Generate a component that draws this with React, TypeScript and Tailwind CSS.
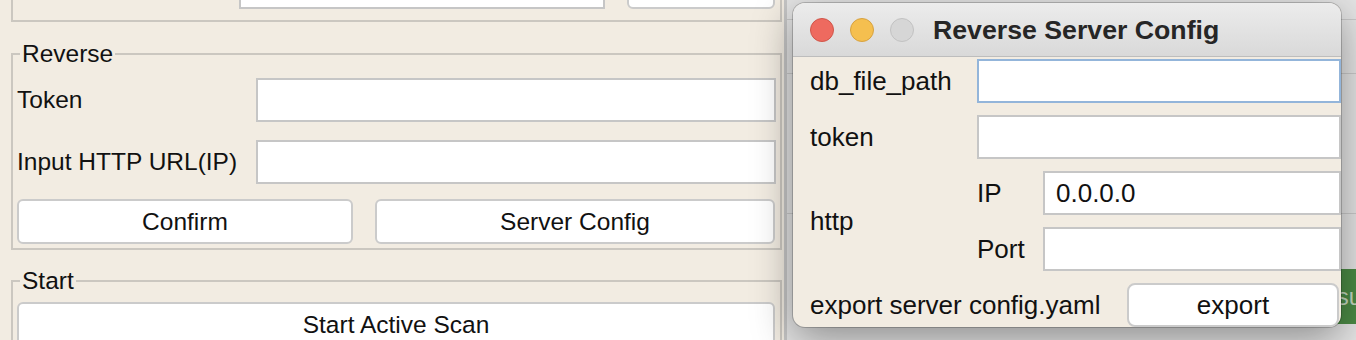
import React from 'react';

const inputBase = 'h-[44px] border-2 border-[#c6c6c6] bg-white px-[11px] outline-none';
const inputCls = inputBase + ' w-full';
const btnCls = 'h-[45px] rounded-[6px] border-2 border-[#cbcbcb] bg-white text-center';

function Light({ color }: { color: string }) {
  return <span className={`size-[24px] rounded-full border ${color}`} />;
}

export default function App() {
  return (
    <div className="flex h-[340px] w-[1356px] overflow-hidden font-['Liberation_Sans',Arial,sans-serif] text-[#111]">
      {/* main window */}
      <div className="h-full w-[787px] shrink-0 border-r-[3px] border-[#c6c6c6] bg-[#f2ece2] pl-[11px] text-[24.5px] leading-[30px]">
        <div className="-mt-[38px] w-[771px] border-2 border-[#cbc7c0] px-[4px] pb-[11px]">
          <div className="flex items-center">
            <span className="w-[222px] shrink-0 whitespace-nowrap">Input HTTP Proxy</span>
            <input className={inputBase + ' w-[366px] shrink-0'} />
            <button className={btnCls + ' ml-[22px] h-[44px] w-[148px] shrink-0'} />
          </div>
        </div>

        <fieldset className="mt-[17px] w-[771px] border-2 border-[#cbc7c0] px-[4px] pt-[9px] pb-[4px]">
          <legend className="ml-[3px] px-[2px] leading-[30px]">Reverse</legend>
          <div className="grid grid-cols-[239px_520px] items-center gap-y-[18px]">
            <span className="whitespace-nowrap">Token</span>
            <input className={inputCls} />
            <span className="whitespace-nowrap">Input HTTP URL(IP)</span>
            <input className={inputCls} />
          </div>
          <div className="mt-[15px] flex gap-[22px]">
            <button className={btnCls + ' w-[336px]'}>Confirm</button>
            <button className={btnCls + ' w-[400px]'}>Server Config</button>
          </div>
        </fieldset>

        <fieldset className="mt-[16px] w-[771px] border-2 border-[#cbc7c0] px-[4px] pt-[6px] pb-[5px]">
          <legend className="ml-[3px] px-[2px] leading-[30px]">Start</legend>
          <button className={btnCls + ' w-[758px]'}>Start Active Scan</button>
        </fieldset>
      </div>

      {/* window behind + dialog */}
      <div className="relative h-full flex-1 bg-[#e4e4e4]">
        <div className="h-[20px] border-b border-[#c9c9c9]" />
        <div className="h-[54px] border-b border-[#c9c9c9]" />
        <div className="h-[140px] border-b border-[#c9c9c9]" />
        <div className="mt-[55px] ml-[463px] h-[55px] w-[200px] bg-[#4b8a45] pl-[56px] text-[24px] leading-[55px] text-[#c4d8c0]">
          Result
        </div>

        <div className="absolute left-[6px] top-[3px] h-[324px] w-[548px] overflow-hidden rounded-[12px] bg-[#f2ece2] text-[26px] leading-[30px] shadow-[0_0_0_1px_rgba(0,0,0,0.2),0_12px_40px_rgba(0,0,0,0.38)]">
          <div className="flex h-[54px] items-center border-b border-[#bdbdbd] bg-linear-to-b from-[#ececec] to-[#d9d9d9] pl-[17px]">
            <div className="flex gap-[16px]">
              <Light color="bg-[#ee6a5f] border-[#d0564a]" />
              <Light color="bg-[#f5bf4f] border-[#d7a240]" />
              <Light color="bg-[#d6d6d6] border-[#c2c2c2]" />
            </div>
            <span className="ml-[19px] text-[26.7px] font-bold text-[#262626]">Reverse Server Config</span>
          </div>

          <div className="pl-[17px] pt-[2px]">
            <div className="grid grid-cols-[167px_1fr] items-center gap-y-[12px]">
              <span>db_file_path</span>
              <input className="h-[44px] w-full border-2 border-[#93b5da] bg-white px-[11px] outline-none" />
              <span>token</span>
              <input className={inputCls} />
              <span>http</span>
              <div className="grid grid-cols-[66px_1fr] items-center gap-y-[12px]">
                <span>IP</span>
                <input className={inputCls} defaultValue="0.0.0.0" />
                <span>Port</span>
                <input className={inputCls} />
              </div>
            </div>
            <div className="mt-[12px] flex items-center">
              <span className="w-[317px] whitespace-nowrap">export server config.yaml</span>
              <button className="h-[44px] w-[212px] rounded-[8px] border-2 border-[#cbcbcb] bg-white text-center">export</button>
            </div>
          </div>
        </div>
      </div>
    </div>
  );
}
